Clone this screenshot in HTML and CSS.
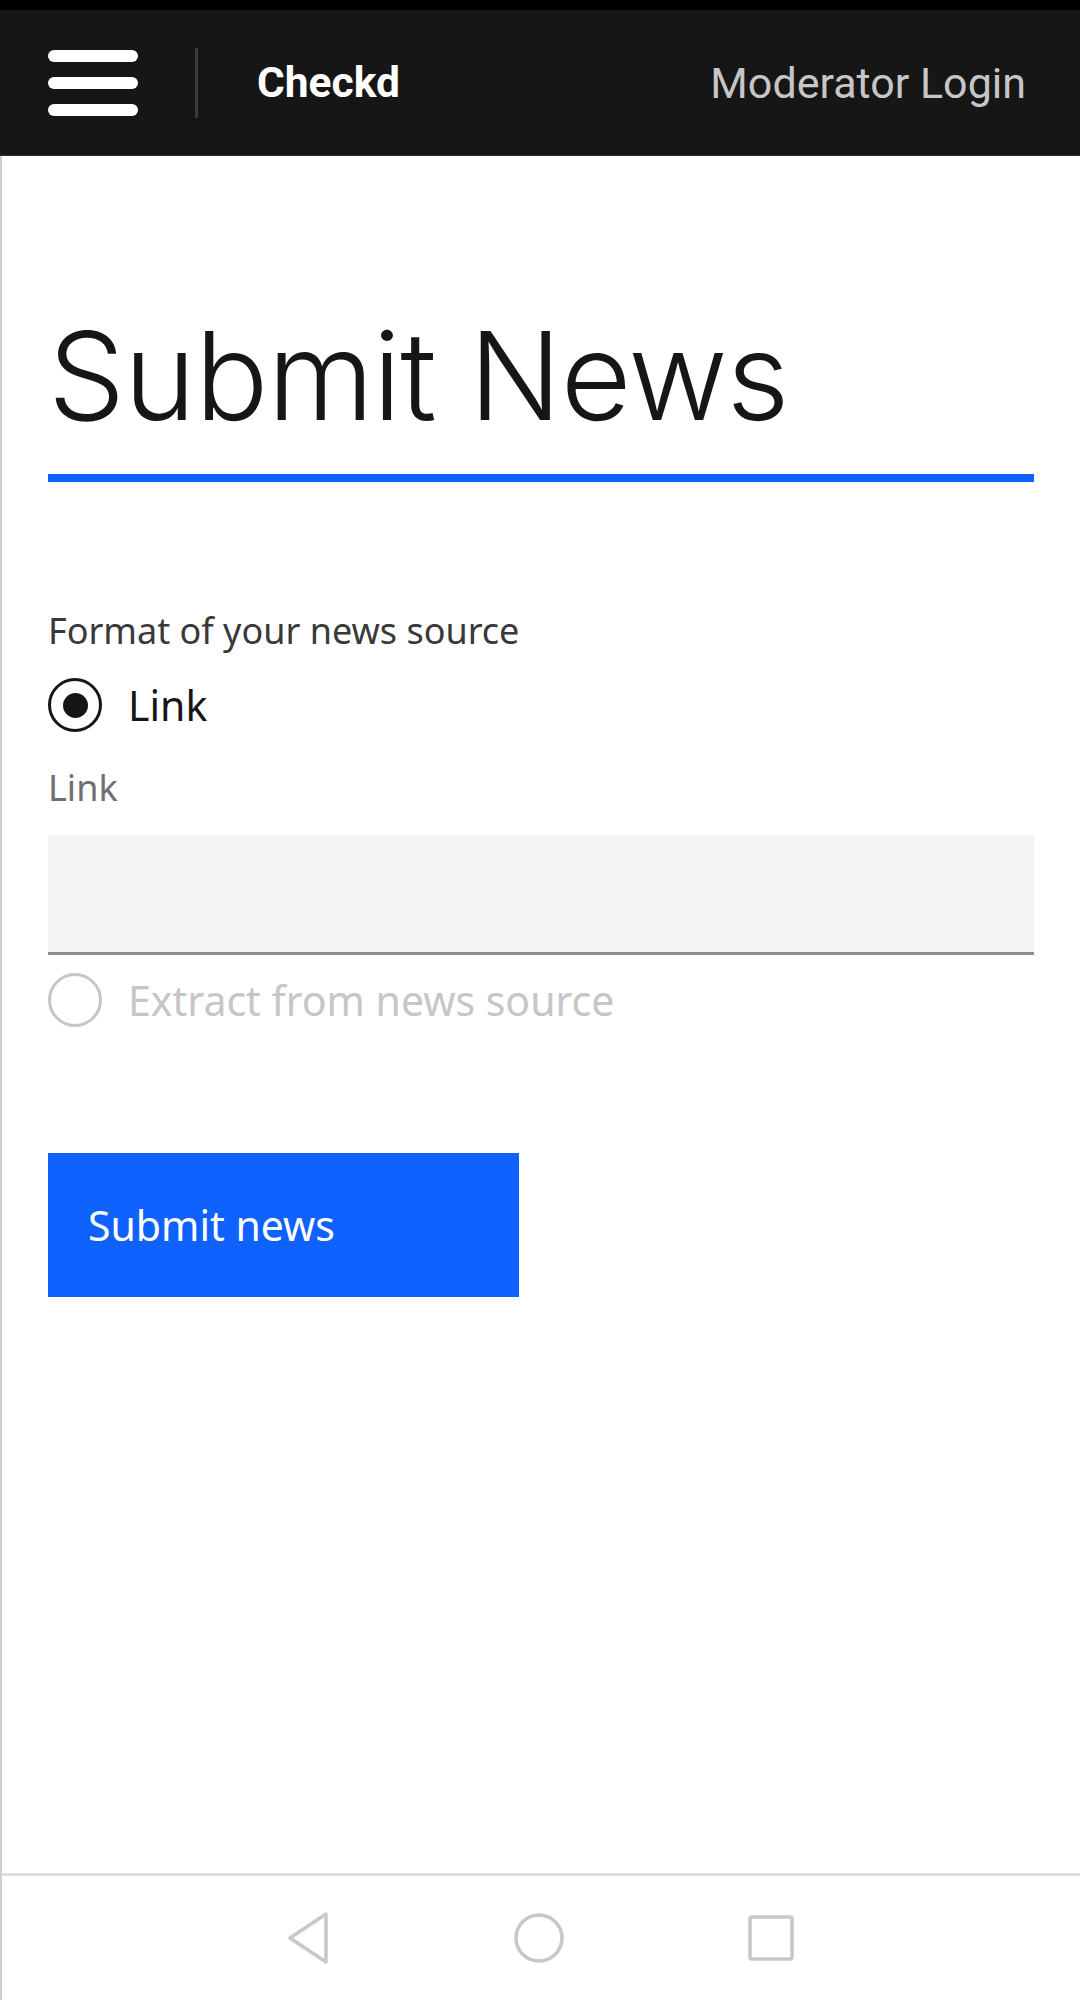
FILE: index.html
```html
<!DOCTYPE html>
<html lang="en">
<head>
<meta charset="utf-8">
<title>Checkd - Submit News</title>
<link rel="stylesheet" href="styles.css">
</head>
<body>
<div class="status"></div>
<header class="header">
  <button class="menu" aria-label="Menu">
    <span class="bar"></span><span class="bar"></span><span class="bar"></span>
  </button>
  <span class="divider"></span>
  <span class="brand">Checkd</span>
  <span class="login">Moderator Login</span>
</header>
<div class="page">
  <main class="main">
    <h1 class="title">Submit News</h1>
    <div class="rule"></div>
    <form class="form">
      <div class="legend">Format of your news source</div>
      <label class="radio">
        <span class="ring checked"><span class="dot"></span></span>
        <span class="radio-text">Link</span>
      </label>
      <div class="field-label">Link</div>
      <div class="input"></div>
      <label class="radio disabled">
        <span class="ring"></span>
        <span class="radio-text">Extract from news source</span>
      </label>
      <div class="button">Submit news</div>
    </form>
  </main>
  <nav class="navbar">
    <svg class="nav-icon" width="45" height="54" viewBox="0 0 45 54"><path d="M40 3 L40 51 L4 27 Z" fill="none" stroke="#c8c8c8" stroke-width="3.5" stroke-linejoin="round"/></svg>
    <svg class="nav-icon" width="52" height="52" viewBox="0 0 52 52"><circle cx="26" cy="26" r="23" fill="none" stroke="#c8c8c8" stroke-width="3.5"/></svg>
    <svg class="nav-icon" width="48" height="48" viewBox="0 0 48 48"><rect x="3" y="3" width="42" height="42" rx="2" fill="none" stroke="#c8c8c8" stroke-width="3.5"/></svg>
  </nav>
</div>
</body>
</html>
```
FILE: styles.css
```css
* { box-sizing: border-box; }
html, body { margin: 0; padding: 0; }
body {
  width: 1080px;
  height: 2000px;
  display: flex;
  flex-direction: column;
  background: #ffffff;
  font-family: "Noto Sans", "Open Sans", sans-serif;
  overflow: hidden;
}
.status { height: 10px; background: #000; flex: none; }
.header {
  flex: none;
  height: 146px;
  background: #161616;
  border-bottom: 1px solid #2e2e2e;
  display: flex;
  align-items: center;
  padding: 0 54px 0 48px;
  font-family: Roboto, "Liberation Sans", sans-serif;
}
.menu {
  width: 90px;
  height: 66px;
  padding: 0;
  border: 0;
  background: none;
  display: flex;
  flex-direction: column;
  justify-content: space-between;
}
.bar { display: block; height: 12px; border-radius: 6px; background: #fff; }
.divider { width: 3px; height: 70px; background: #3a3a3a; margin-left: 57px; }
.brand { margin-left: 59px; color: #fff; font-weight: 700; font-size: 42.5px; }
.login { margin-left: auto; color: #c6c6c6; font-size: 43px; font-weight: 400; }
.page {
  flex: 1;
  display: flex;
  flex-direction: column;
  border-left: 2px solid #cfcfcf;
}
.main { flex: 1; padding: 0 46px; }
.title {
  margin: 150px 0 0;
  font-family: Inter, Roboto, sans-serif;
  font-weight: 300;
  font-size: 122px;
  line-height: 140px;
  color: #161616;
  letter-spacing: -1px;
}
.rule { height: 8px; background: #0f62fe; margin-top: 28px; }
.form { margin-top: 129px; display: flex; flex-direction: column; align-items: flex-start; }
.legend { font-size: 36px; line-height: 40px; color: #393939; }
.radio { display: flex; align-items: center; margin-top: 27px; }
.ring {
  width: 54px; height: 54px;
  border: 3px solid #161616;
  border-radius: 50%;
  display: flex; align-items: center; justify-content: center;
}
.dot { width: 25px; height: 25px; border-radius: 50%; background: #161616; }
.radio-text { margin-left: 26px; font-size: 41px; line-height: 54px; color: #161616; }
.field-label { margin-top: 36px; font-size: 36px; line-height: 40px; color: #6f6f6f; }
.input {
  align-self: stretch;
  margin-top: 27px;
  height: 120px;
  background: #f4f4f4;
  border-bottom: 3px solid #8d8d8d;
}
.disabled { margin-top: 18px; }
.disabled .ring { border-color: #c6c6c6; }
.disabled .radio-text { color: #c6c6c6; }
.button {
  margin-top: 126px;
  width: 471px;
  height: 144px;
  background: #0f62fe;
  color: #fff;
  font-size: 41px;
  display: flex;
  align-items: center;
  padding-left: 40px;
}
.navbar {
  flex: none;
  height: 127px;
  border-top: 3px solid #dedede;
  display: flex;
  align-items: center;
  justify-content: center;
  gap: 182px;
  padding-right: 2px;
}
```
